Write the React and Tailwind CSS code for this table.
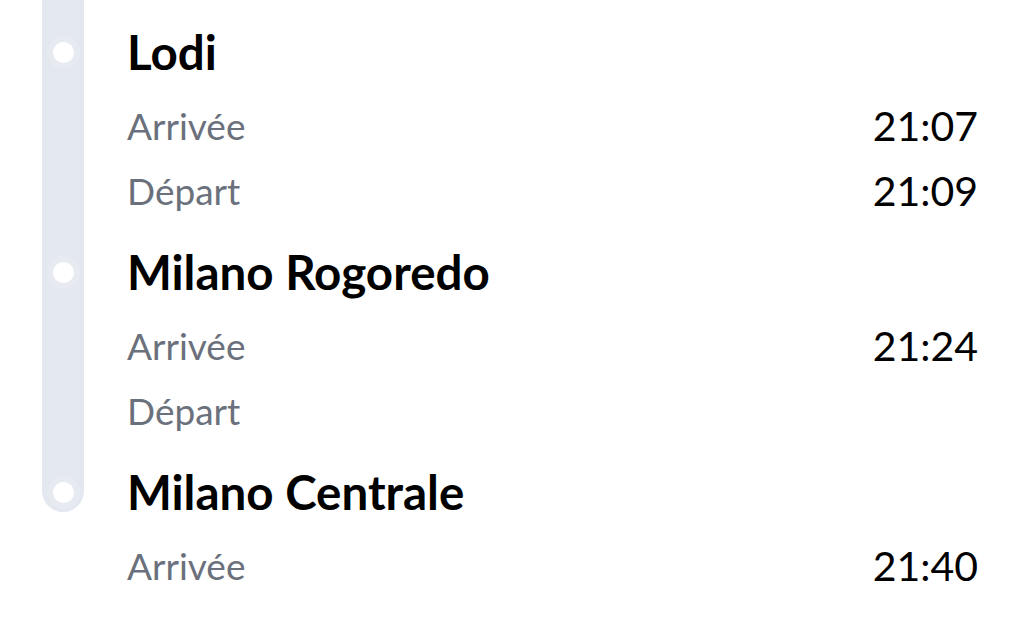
import React from 'react'

const stops = [
  { name: 'Lodi', rows: [['Arrivée', '21:07'], ['Départ', '21:09']] },
  { name: 'Milano Rogoredo', rows: [['Arrivée', '21:24'], ['Départ', '']] },
  { name: 'Milano Centrale', rows: [['Arrivée', '21:40']] },
]

function Stop({ stop, first, last }) {
  return (
    <div className="flex">
      {/* timeline bar */}
      <div
        className={`ml-[42px] w-[42px] shrink-0 bg-[#e3e7ef] ${first ? 'pt-4' : ''} ${
          last ? 'h-[56px] self-start rounded-b-full' : ''
        }`}
      >
        <div className="flex h-[72px] items-center justify-center">
          <div className="h-[21px] w-[21px] rounded-full bg-white ring-[6px] ring-white/15" />
        </div>
      </div>

      <div className={`ml-[43px] flex-1 pr-[46px] ${first ? 'pt-4' : ''} ${last ? '' : 'pb-[13px]'}`}>
        <div className="flex h-[72px] items-center text-[47.5px] font-bold text-black">{stop.name}</div>
        <div className="mt-[5px]">
          {stop.rows.map(([label, time]) => (
            <div key={label} className="flex h-[65px] items-center justify-between">
              <span className="text-[37px] text-[#6b717c]">{label}</span>
              <span className="text-[41px] text-black">{time}</span>
            </div>
          ))}
        </div>
      </div>
    </div>
  )
}

export default function App() {
  return (
    <div className="h-[621px] w-[1024px] overflow-hidden bg-white font-['Lato',sans-serif]">
      {stops.map((s, i) => (
        <Stop key={s.name} stop={s} first={i === 0} last={i === stops.length - 1} />
      ))}
    </div>
  )
}
